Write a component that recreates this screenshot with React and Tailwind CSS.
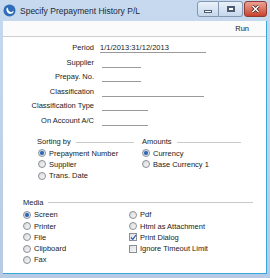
const Radio = ({ on }) => (
  <span className="relative inline-flex w-[8px] h-[8px] rounded-full border border-[#8a8f96] bg-gradient-to-br from-[#d8dadd] to-[#f7f7f7] items-center justify-center shrink-0">
    {on && <span className="w-[4px] h-[4px] rounded-full bg-[#2b68b4] shadow-[0_0_1px_#6fa5e0]" />}
  </span>
)

const Check = ({ on }) => (
  <span className="relative inline-flex w-[8px] h-[8px] border border-[#8a8f96] bg-gradient-to-br from-[#dcdee1] to-[#f8f8f8] items-center justify-center shrink-0">
    {on && (
      <svg width="7" height="7" viewBox="0 0 7 7" className="absolute left-0 top-0">
        <path d="M1 3.5 L2.8 5.3 L6 1" fill="none" stroke="#2a55a0" strokeWidth="1.2" />
      </svg>
    )}
  </span>
)

const Opt = ({ label, on, box }) => (
  <div className="flex items-center h-[11.25px] gap-[3px]">
    {box ? <Check on={on} /> : <Radio on={on} />}
    <span>{label}</span>
  </div>
)

const Row = ({ label, w, value, gap = 'ml-[8px]' }) => (
  <div className="flex items-center h-[14.5px]">
    <div className="w-[91px] text-right">{label}</div>
    <div className={`${gap} h-[11px] border-b border-[#9a9a9a] leading-[11px]`} style={{ width: w }}>
      {value}
    </div>
  </div>
)

const Head = ({ label, line }) => (
  <div className="flex items-center h-[11px]">
    <span>{label}</span>
    <span className={`ml-[5px] h-px bg-[#c9c9c9] ${line}`} />
  </div>
)

export default function App() {
  return (
    <div className="w-[270px] h-[278px] flex flex-col bg-gradient-to-b from-[#c6d9ee] to-[#b6cbe3] font-['Liberation_Sans',Arial,sans-serif] text-[7.5px] text-[#1a1a1a] overflow-hidden">
      <div className="h-[21px] flex items-start shrink-0">
        <svg width="13" height="13" viewBox="0 0 13 13" className="ml-[3px] mt-[4px]">
          <circle cx="6.5" cy="6.5" r="6" fill="#2f6db8" />
          <path d="M4 3.5 C2.5 6 4 10 8 9.8 C9.8 9.6 10.8 8 10.5 6.5 C9.5 8.3 6.5 8.6 5.6 6.6 C5 5.2 5.2 4.2 4 3.5Z" fill="#ffffff" />
        </svg>
        <span className="ml-[4px] mt-[5px] text-[8.5px] text-[#1b2a3c]">Specify Prepayment History P/L</span>
        <div className="ml-auto mr-[3px] mt-[1px] flex">
          <div className="w-[22px] h-[16px] rounded-l-[3px] border border-[#8397b2] bg-gradient-to-b from-[#eaf1f9] to-[#c6d7eb] flex items-center justify-center">
            <span className="w-[8px] h-[3px] bg-white border border-[#4a5b72] mt-[4px]" />
          </div>
          <div className="w-[24px] h-[16px] rounded-r-[3px] border border-l-0 border-[#8397b2] bg-gradient-to-b from-[#eaf1f9] to-[#c6d7eb] flex items-center justify-center">
            <span className="w-[8px] h-[6px] border-[2px] border-[#4a5b72] bg-white" />
          </div>
          <div className="ml-[1px] w-[23px] h-[16px] rounded-[3px] border border-[#8d3b30] bg-gradient-to-b from-[#e9a294] to-[#c9402d] flex items-center justify-center">
            <svg width="9" height="8" viewBox="0 0 9 8">
              <path d="M1.5 1 L7.5 7 M7.5 1 L1.5 7" stroke="#3a1410" strokeWidth="3" />
              <path d="M1.5 1 L7.5 7 M7.5 1 L1.5 7" stroke="#ffffff" strokeWidth="1.6" />
            </svg>
          </div>
        </div>
      </div>

      <div className="flex-1 flex flex-col ml-[3px] mr-[3px] mb-[4px] bg-white border-r border-b border-[#3aa7dc]">
        <div className="h-[16px] shrink-0 flex items-center justify-end pr-[17px] border-b border-[#cfcfcf] bg-[#fbfbfb]">
          Run
        </div>

        <div className="pt-[3.5px]">
          <Row label="Period" w="106px" gap="ml-[6px]" value="1/1/2013:31/12/2013" />
          <Row label="Supplier" w="39px" />
          <Row label="Prepay. No." w="39px" />
          <Row label="Classification" w="102px" />
          <Row label="Classification Type" w="46px" />
          <Row label="On Account A/C" w="46px" />
        </div>

        <div className="flex mt-[9px]">
          <div className="ml-[34px] w-[105px]">
            <Head label="Sorting by" line="w-[58px]" />
            <div className="pl-[1px]">
              <Opt label="Prepayment Number" on />
              <Opt label="Supplier" />
              <Opt label="Trans. Date" />
            </div>
          </div>
          <div>
            <Head label="Amounts" line="w-[64px]" />
            <Opt label="Currency" on />
            <Opt label="Base Currency 1" />
          </div>
        </div>

        <div className="ml-[20px] mt-[16px]">
          <Head label="Media" line="w-[205px]" />
          <div className="flex mt-[1px]">
            <div className="w-[106px]">
              <Opt label="Screen" on />
              <Opt label="Printer" />
              <Opt label="File" />
              <Opt label="Clipboard" />
              <Opt label="Fax" />
            </div>
            <div>
              <Opt label="Pdf" />
              <Opt label="Html as Attachment" />
              <Opt label="Print Dialog" box on />
              <Opt label="Ignore Timeout Limit" box />
            </div>
          </div>
        </div>
      </div>
    </div>
  )
}
